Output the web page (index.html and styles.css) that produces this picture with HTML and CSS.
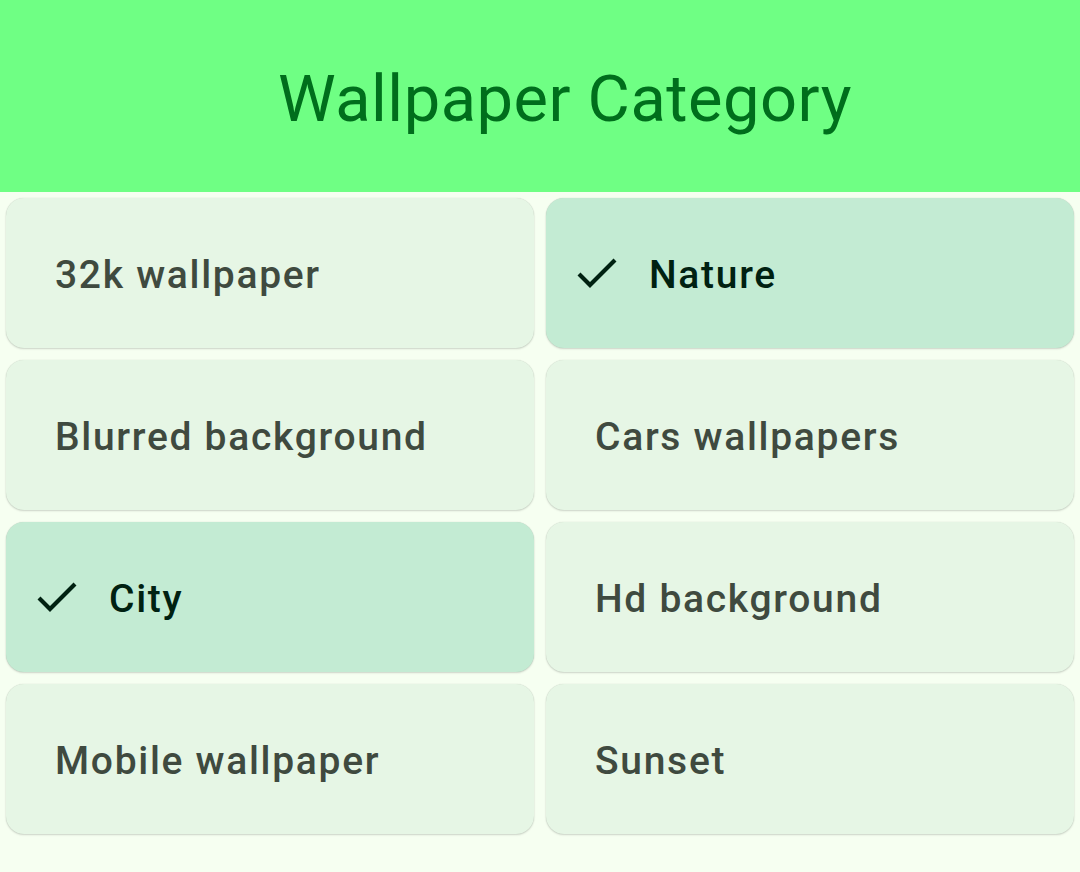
FILE: index.html
```html
<!DOCTYPE html>
<html lang="en">
<head>
<meta charset="utf-8">
<title>Wallpaper Category</title>
<link rel="stylesheet" href="styles.css">
</head>
<body>
<header class="top-bar">
  <h1 class="title">Wallpaper Category</h1>
</header>
<main class="grid">
  <div class="chip">32k wallpaper</div>
  <div class="chip selected"><svg class="check" viewBox="0 0 40 32" width="40" height="32"><polyline points="2,17 13,28 38,3" fill="none" stroke="currentColor" stroke-width="4.2"/></svg><span>Nature</span></div>
  <div class="chip">Blurred background</div>
  <div class="chip">Cars wallpapers</div>
  <div class="chip selected"><svg class="check" viewBox="0 0 40 32" width="40" height="32"><polyline points="2,17 13,28 38,3" fill="none" stroke="currentColor" stroke-width="4.2"/></svg><span>City</span></div>
  <div class="chip">Hd background</div>
  <div class="chip">Mobile wallpaper</div>
  <div class="chip">Sunset</div>
</main>
</body>
</html>
```
FILE: styles.css
```css
html, body {
  margin: 0;
  padding: 0;
}
body {
  background: #f6fff1;
  font-family: Roboto, "Noto Sans", sans-serif;
  width: 1080px;
  height: 872px;
  overflow: hidden;
}
.top-bar {
  height: 192px;
  background: #6fff84;
  display: flex;
  align-items: center;
  justify-content: center;
  padding-left: 50px;
  box-sizing: border-box;
}
.title {
  margin: 0;
  font-weight: 400;
  font-size: 65px;
  color: #006e1c;
  padding-top: 6px;
  letter-spacing: 0.5px;
}
.grid {
  display: grid;
  grid-template-columns: 1fr 1fr;
  gap: 12px;
  padding: 6px;
}
.chip {
  height: 150px;
  box-sizing: border-box;
  border-radius: 18px;
  background: #e6f6e5;
  color: #3f4a3f;
  font-size: 39px;
  font-weight: 500;
  letter-spacing: 1.7px;
  display: flex;
  align-items: center;
  padding-left: 49px;
  padding-top: 4px;
  box-shadow: 0 1px 2px rgba(0, 0, 0, 0.16), 0 0 1px rgba(0, 0, 0, 0.18);
}
.chip.selected {
  background: #c3ebd3;
  color: #002111;
  padding-left: 31px;
  gap: 32px;
}
.check {
  display: block;
  flex: none;
  margin-top: -4px;
}
```
